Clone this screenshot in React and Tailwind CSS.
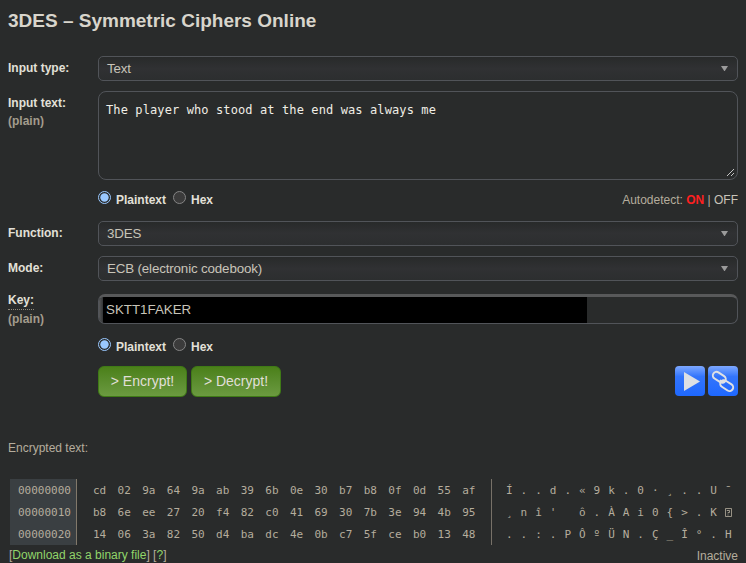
const HEX_ROWS = [
  { offset: "00000000", bytes: "cd 02 9a 64 9a ab 39 6b 0e 30 b7 b8 0f 0d 55 af", text: "Í..d.«9k.0·¸..U¯" },
  { offset: "00000010", bytes: "b8 6e ee 27 20 f4 82 c0 41 69 30 7b 3e 94 4b 95", text: "¸nî' ô.ÀAi0{>.K⍰" },
  { offset: "00000020", bytes: "14 06 3a 82 50 d4 ba dc 4e 0b c7 5f ce b0 13 48", text: "..:.PÔºÜN.Ç_Î°.H" },
];

function Label({ children }) {
  return <div className="w-[90px] shrink-0 text-[12px] leading-[18px] font-bold text-[#e2e0d8]">{children}</div>;
}

function Select({ value }) {
  return (
    <div className="flex h-[25px] flex-1 items-center justify-between rounded-[5px] border border-[#515459] bg-linear-to-b from-[#282a2a] via-[#303133] to-[#2c2e2f] pr-[9px] pl-2 text-[13.33px] tracking-[-0.14px] text-[#c8c4b9]">
      <span>{value}</span>
      <svg width="7" height="5" viewBox="0 0 7 5" className="fill-[#9b9b9b]"><path d="M0 0H7L3.8 5H3.2Z" /></svg>
    </div>
  );
}

function Radio({ on, label }) {
  return (
    <span className="flex h-[18px] items-start">
      <svg width="13" height="13" viewBox="0 0 13 13" className="shrink-0">
        <circle cx="6.5" cy="6.5" r="6" fill={on ? "#292b2b" : "#3b3b3b"} stroke={on ? "#99c8ff" : "#858585"} />
        {on && <circle cx="6.5" cy="6.5" r="4.2" fill="#99c8ff" />}
      </svg>
      <span className="ml-[5px] pt-[2px] text-[12px] leading-[15px] font-bold text-[#e2e0d8]">{label}</span>
    </span>
  );
}

function RadioPair() {
  return (
    <div className="flex gap-[7px]">
      <Radio on label="Plaintext" />
      <Radio label="Hex" />
    </div>
  );
}

function GreenButton({ width, children }) {
  return (
    <button className={`flex h-[31px] items-center justify-center rounded-[6px] border border-[#3f7a16] bg-linear-to-b from-[#4b8019] to-[#6b9a40] text-[14px] text-[#e0dfd8] ${width}`}>
      {children}
    </button>
  );
}

function BlueButton({ children }) {
  return (
    <button className="flex size-[30px] items-center justify-center rounded-[4px] bg-linear-to-b from-[#7da8ff] via-[#3375fb] via-35% to-[#1e68ff]">
      {children}
    </button>
  );
}

export default function App() {
  return (
    <main className="flex h-[563px] w-[746px] flex-col overflow-hidden bg-[#292b2b] px-2 font-['Liberation_Sans',Arial,sans-serif] text-[#b5ad9d]">
      <h1 className="mt-[9px] h-6 text-[19px] leading-6 font-bold text-[#d8d5cc]">3DES – Symmetric Ciphers Online</h1>

      <div className="mt-[23px] flex h-[25px]">
        <Label><div className="pt-[3px]">Input type:</div></Label>
        <Select value="Text" />
      </div>

      <div className="mt-[10px] flex h-[89px]">
        <Label>
          <div className="pt-[3px]">Input text:</div>
          <div className="text-[#a39c8d]">(plain)</div>
        </Label>
        <div className="flex flex-1 items-start justify-between rounded-[8px] border border-[#515459] pt-[11px] pl-[7px] font-['DejaVu_Sans_Mono',monospace] text-[12px] leading-[15px] tracking-[0.108px] text-[#f0eee6]">
          <span>The player who stood at the end was always me</span>
          <svg width="9" height="9" viewBox="0 0 9 9" className="mt-auto mr-[2px] mb-[2px] self-end" stroke="#c4c4c4" fill="none">
            <path d="M1 8L8 1M5 8L8 5" />
          </svg>
        </div>
      </div>

      <div className="mt-[11px] flex h-[18px] justify-between pl-[90px]">
        <RadioPair />
        <div className="pt-[2px] text-[12px] leading-[15px]">
          Autodetect: <b className="text-[#ff2020]">ON</b> | <span className="text-[#c8c4b9]">OFF</span>
        </div>
      </div>

      <div className="mt-3 flex h-[25px]">
        <Label><div className="pt-[3px]">Function:</div></Label>
        <Select value="3DES" />
      </div>
      <div className="mt-[10px] flex h-[25px]">
        <Label><div className="pt-[3px]">Mode:</div></Label>
        <Select value="ECB (electronic codebook)" />
      </div>

      <div className="mt-[13px] flex h-[30px]">
        <Label>
          <div className="-mt-[3px] w-fit border-b border-dotted border-[#8f897c]">Key:</div>
          <div className="text-[#a39c8d]">(plain)</div>
        </Label>
        <div className="flex flex-1 overflow-hidden rounded-[7px] border border-t-[3px] border-[#515459] border-t-[#58595a]">
          <div className="w-1 bg-linear-to-r from-[#58595a] to-[#333536]" />
          <div className="flex h-[26px] w-[484px] items-center bg-black pl-[3px] text-[13.33px] text-[#c8c4b9]">SKTT1FAKER</div>
        </div>
      </div>

      <div className="mt-[14px] flex h-[18px] pl-[90px]">
        <RadioPair />
      </div>

      <div className="mt-[10px] flex h-[31px] justify-between pl-[90px]">
        <div className="flex gap-1">
          <GreenButton width="w-[89px]">&gt; Encrypt!</GreenButton>
          <GreenButton width="w-[90px]">&gt; Decrypt!</GreenButton>
        </div>
        <div className="flex gap-[3px]">
          <BlueButton>
            <svg width="30" height="30" viewBox="0 0 30 30"><path d="M9 6L25 15.5L9 25Z" fill="#dde0e4" /></svg>
          </BlueButton>
          <BlueButton>
            <svg width="30" height="30" viewBox="0 0 30 30" fill="none" stroke="#dfe1e4" strokeWidth="2">
              <rect x="-7" y="-3.6" width="14" height="7.2" rx="3.6" transform="translate(11.3 11.3) rotate(33)" />
              <rect x="-7" y="-3.6" width="14" height="7.2" rx="3.6" transform="translate(18.7 19.6) rotate(33)" />
              <path d="M11.8 14.4L16.6 16.4" />
            </svg>
          </BlueButton>
        </div>
      </div>

      <div className="mt-[42px] h-[18px] text-[12px] leading-[18px]">Encrypted text:</div>

      <div className="mt-[22px] ml-[2px] flex h-[66px] font-['DejaVu_Sans_Mono',monospace] text-[11px] leading-[22px]">
        <div className="w-[67px] shrink-0 border-r border-[#81786a] bg-[#3a3f42] pt-px pl-2">
          {HEX_ROWS.map((row) => <div key={row.offset} className="h-[22px]">{row.offset}</div>)}
        </div>
        <div className="w-[415px] shrink-0 border-r border-[#777168] pt-px pl-4">
          {HEX_ROWS.map((row) => (
            <div key={row.offset} className="flex h-[22px]">
              {row.bytes.split(" ").map((byte, i) => <span key={i} className="w-[24.62px] shrink-0">{byte}</span>)}
            </div>
          ))}
        </div>
        <div className="pt-px pl-[14px]">
          {HEX_ROWS.map((row) => (
            <div key={row.offset} className="flex h-[22px]">
              {[...row.text].map((char, i) =>
                char === "⍰" ? (
                  <svg key={i} width="7" height="9" viewBox="0 0 7 9" className="mt-[6px]" fill="none" stroke="currentColor">
                    <path d="M.5 .5H6.5V8.5H.5ZM2 3V2.5H4.5V4.5H3V5.5M3 6.5V7.5" strokeWidth=".8" />
                  </svg>
                ) : (
                  <span key={i} className="w-[14.6px] shrink-0">{char}</span>
                ),
              )}
            </div>
          ))}
        </div>
      </div>

      <div className="flex h-[18px] justify-between pl-px text-[12px] leading-[20px]">
        <span>[<a className="text-[#91d56a]">Download as a binary file</a>] [<a className="text-[#91d56a]">?</a>]</span>
        <span className="pt-px">Inactive</span>
      </div>
    </main>
  );
}
